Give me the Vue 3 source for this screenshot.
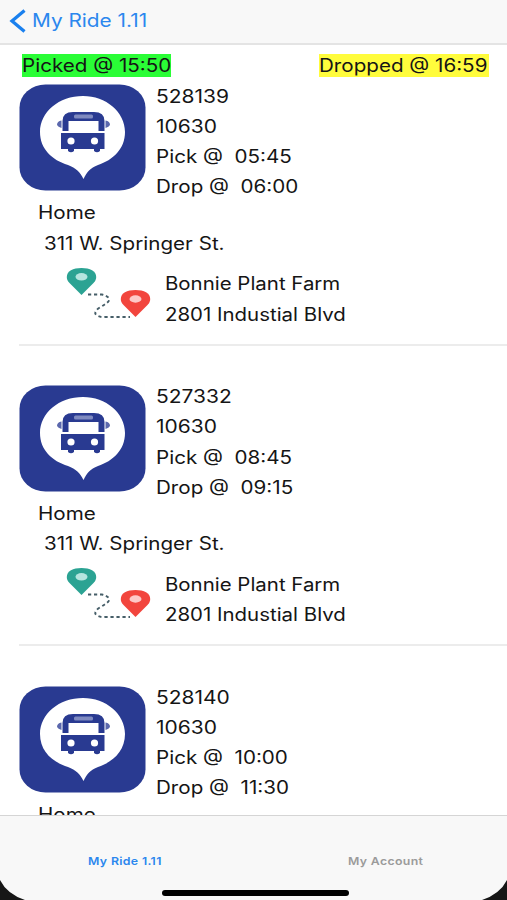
<script setup>
const gap = '\u00a0\u00a0'
const rides = [
  { id: '528139', code: '10630', pick: '05:45', drop: '06:00', picked: '15:50', dropped: '16:59' },
  { id: '527332', code: '10630', pick: '08:45', drop: '09:15' },
  { id: '528140', code: '10630', pick: '10:00', drop: '11:30' }
]
</script>

<template>
  <div class="screen">
    <header class="nav">
      <svg class="back" width="18" height="24" viewBox="0 0 18 24">
        <path d="M15.500 1.500 L3 12 L15.500 22.500" fill="none" stroke="#1a80ee" stroke-width="3.300" />
      </svg>
      <span class="wide nav-title">My Ride 1.11</span>
    </header>

    <main class="list">
      <article v-for="ride in rides" :key="ride.id" class="ride">
        <div class="status">
          <template v-if="ride.picked">
            <span class="tag picked"><span class="wide">Picked @ {{ ride.picked }}</span></span>
            <span class="tag dropped"><span class="wide">Dropped @ {{ ride.dropped }}</span></span>
          </template>
        </div>
        <div class="summary">
          <svg class="logo" width="127" height="107" viewBox="0 0 127 107">
            <rect x="0.5" y="0.5" width="126" height="106" rx="26" ry="23" fill="#293a91" />
            <path d="M64 12 C87 12 106 28 106 48 C106 65 94 76 79 81 C71 84 68 88 64.500 95 C61 88 57 84 49 81 C33 76 21 65 21 48 C21 28 40 12 64 12 Z" fill="#fff" />
            <path d="M43.500 47 V37 Q43.500 28 54 28 H75 Q85.500 28 85.500 37 V47 H79.500 V37 H49.500 V47 Z" fill="#293a91" />
            <rect x="55" y="30.500" width="19" height="4" rx="1.500" fill="#7f8ac0" />
            <path d="M42.500 36.500 Q38 37 38 41 Q39 43 42.500 44 Z M86.500 36.500 Q91 37 91 41 Q90 43 86.500 44 Z" fill="#5b68ad" />
            <path d="M42 49 H85.500 V65 H81 V67 Q78 69.500 75 67 V65 H55 V67 Q52 69.500 49 67 V65 H42 Z" fill="#293a91" />
            <circle cx="52" cy="57" r="3.6" fill="#fff" />
            <circle cx="75.500" cy="57" r="3.6" fill="#fff" />
          </svg>
          <div class="lines">
            <div class="wide number">{{ ride.id }}</div>
            <div class="wide number">{{ ride.code }}</div>
            <div class="wide">Pick @{{ gap }}{{ ride.pick }}</div>
            <div class="wide">Drop @{{ gap }}{{ ride.drop }}</div>
          </div>
        </div>
        <div class="origin">
          <div class="wide">Home</div>
          <div class="wide street">311 W. Springer St.</div>
        </div>
        <div class="destination">
          <svg class="route" width="86" height="54" viewBox="0 0 86 54">
            <path d="M22 27.500 H36 Q46 30 42 35 Q38 38 33 41 Q26 46 32 49 Q35 50.500 39 50 H64" fill="none" stroke="#465e68" stroke-width="1.9" stroke-dasharray="3.200 2.800" />
            <path d="M15.500 28 L3.500 16 C1.500 14 0.800 12 0.800 10 C0.800 4 7 1 15.500 1 C24 1 30.200 4 30.200 10 C30.200 12 29.500 14 27.500 16 Z" fill="#2ba393" />
            <ellipse cx="15.500" cy="9.800" rx="6" ry="3.700" fill="#b5e5df" />
            <path d="M69.500 50 L57.500 38 C55.500 36 54.800 34 54.800 32 C54.800 26 61 23 69.500 23 C78 23 84.200 26 84.200 32 C84.200 34 83.500 36 81.500 38 Z" fill="#f2453d" />
            <ellipse cx="69.500" cy="32" rx="6" ry="3.700" fill="#fdc9c7" />
          </svg>
          <div class="lines">
            <div class="wide">Bonnie Plant Farm</div>
            <div class="wide">2801 Industial Blvd</div>
          </div>
        </div>
      </article>
    </main>

    <footer class="tabs">
      <div class="tab active"><span>My Ride 1.11</span></div>
      <div class="tab"><span>My Account</span></div>
      <svg class="corner left" width="25" height="20" viewBox="0 0 25 20"><path d="M0 0 Q7 14 25 20 H0 Z" fill="#161616" /></svg>
      <svg class="corner right" width="25" height="20" viewBox="0 0 25 20"><path d="M25 0 Q18 14 0 20 H25 Z" fill="#161616" /></svg>
      <div class="home-bar"></div>
    </footer>
  </div>
</template>

<style>
body {
  margin: 0;
  background: #fff;
}
</style>

<style scoped>
.screen {
  width: 507px;
  height: 900px;
  display: flex;
  flex-direction: column;
  overflow: hidden;
  background: #fff;
  color: #151515;
  font-family: Inter, "Liberation Sans", sans-serif;
  font-size: 18px;
  line-height: 30.2px;
}
.wide {
  white-space: pre;
  width: max-content;
  transform: scaleX(1.145);
  transform-origin: left center;
}
.wide.number {
  transform: scaleX(1.165);
}
.nav {
  box-sizing: border-box;
  flex: none;
  height: 45px;
  display: flex;
  align-items: center;
  padding: 0 0 1px 9px;
  border-bottom: 2px solid #e4e4e4;
  background: #f8f8f8;
}
.nav .nav-title {
  margin: 1px 0 0 5px;
  color: #2b87ee;
  transform: scaleX(1.155);
}
.list {
  flex: 1;
  min-height: 0;
  overflow: hidden;
}
.ride {
  box-sizing: border-box;
  height: 300.6px;
  margin-left: 19px;
  padding-top: 9px;
  border-bottom: 2px solid #ececec;
}
.status {
  height: 30.4px;
  display: flex;
  justify-content: space-between;
  padding: 0 18px 0 3px;
}
.tag {
  height: 23px;
  line-height: 24px;
}
.tag .wide {
  display: block;
}
.picked {
  width: 149px;
  background: #2afd36;
}
.dropped {
  width: 170px;
  background: #fffc3c;
}
.summary {
  height: 107px;
  display: flex;
}
.summary .lines {
  margin: -2.8px 0 0 10px;
}
.logo,
.route {
  flex: none;
}
.route {
  margin-top: -1px;
}
.origin {
  margin: 7px 0 0 19px;
}
.street {
  margin-left: 5.5px;
}
.destination {
  display: flex;
  margin: 9px 0 0 47px;
}
.destination .lines {
  margin: 1.7px 0 0 12.5px;
}
.destination .wide {
  transform: scaleX(1.135);
}
.tabs {
  position: relative;
  box-sizing: border-box;
  flex: none;
  height: 85px;
  display: flex;
  padding-top: 30px;
  border-top: 1px solid #d5d5d5;
  background: #f8f8f8;
  font-size: 11px;
  font-weight: 600;
  color: #9b9b9b;
}
.tab {
  flex: none;
  width: 249px;
  text-align: center;
}
.tab + .tab {
  width: 247px;
  margin-left: 13px;
}
.tab span {
  display: inline-block;
  transform: scaleX(1.12);
  letter-spacing: 0.3px;
}
.active {
  color: #2b87ee;
}
.corner {
  position: absolute;
  bottom: 0;
}
.left {
  left: 0;
}
.right {
  right: 0;
}
.home-bar {
  position: absolute;
  left: 162px;
  bottom: 4px;
  width: 187px;
  height: 6px;
  border-radius: 3px;
  background: #000;
}
</style>
